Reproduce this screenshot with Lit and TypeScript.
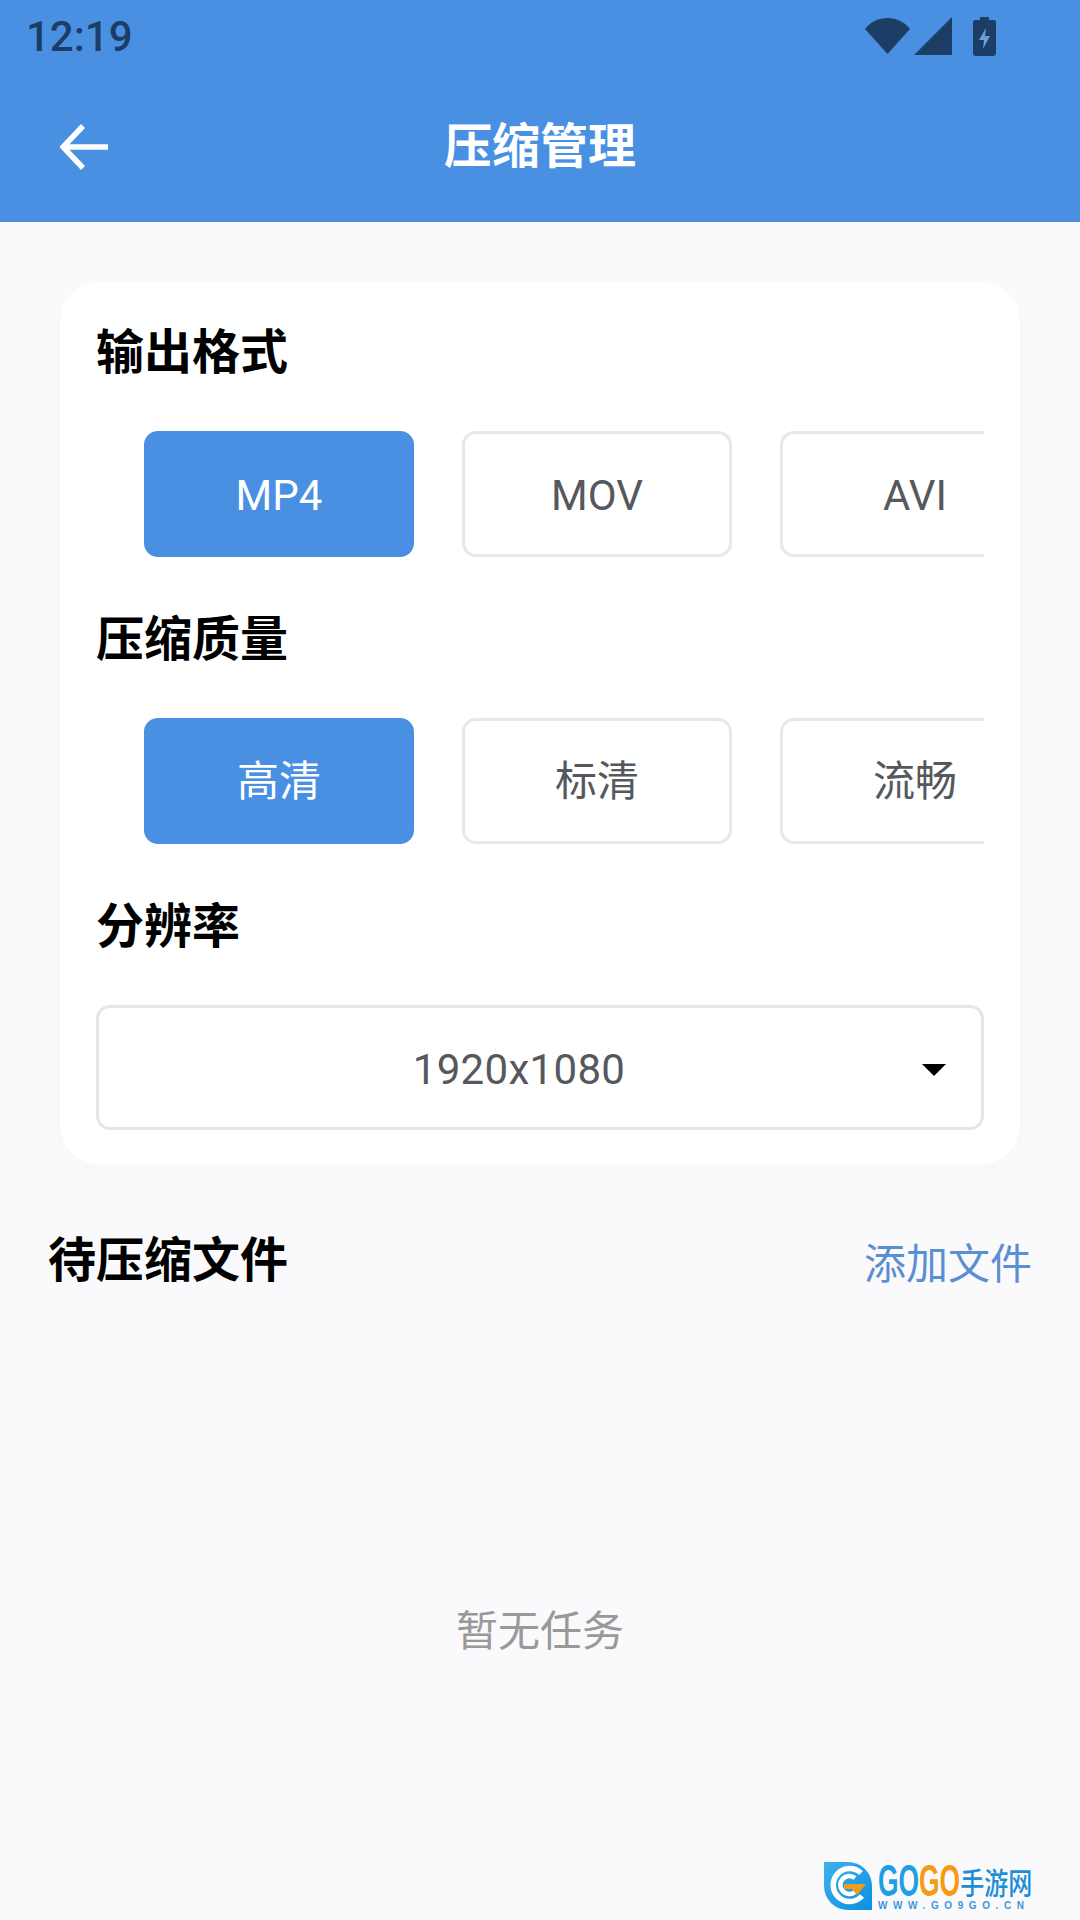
import { LitElement, html, css, svg } from "lit";
import { customElement } from "lit/decorators.js";

const logo = svg`<svg class="logo" viewBox="0 0 48 48" width="48" height="48">
  <defs><linearGradient id="lg" x1="0" y1="0" x2="1" y2="1"><stop offset="0" stop-color="#3fb0ea"/><stop offset="1" stop-color="#0a90e2"/></linearGradient></defs>
  <path d="M0 0H24A24 24 0 0 1 48 24V48H24A24 24 0 0 1 0 24Z" fill="url(#lg)"/>
  <path d="M37 11A16.500 16.500 0 1 0 38 34" fill="none" stroke="#fff" stroke-width="5.500"/>
  <path d="M31 16A9 9 0 1 0 31 30" fill="none" stroke="#fff" stroke-width="4.500"/>
  <path d="M20 22H42L33 33L28 27H20Z" fill="#f39a1e"/>
</svg>`;

@customElement("app-root")
export class AppRoot extends LitElement {
  static styles = css`
    :host { display: block; font-family: Roboto, "Noto Sans CJK SC", sans-serif; }
    .page { position: relative; width: 1080px; height: 1920px; background: #fafafc; display: flex; flex-direction: column; overflow: hidden; }
    .header { background: #4a90e2; height: 222px; display: flex; flex-direction: column; flex: none; }
    .status { height: 74px; display: flex; align-items: center; justify-content: space-between; padding: 0 84px 0 26px; color: #1b3d66; }
    .time { font-size: 42px; line-height: 74px; font-weight: 500; }
    .status-icons { display: flex; align-items: center; margin-bottom: 2px; }
    .status-icons svg { display: block; }
    .toolbar { flex: 1; display: grid; grid-template-columns: 1fr auto 1fr; align-items: center; padding: 0 60px 2px; }
    .back { display: block; }
    .toolbar h1 { margin: 0; color: #fff; font-size: 48px; font-weight: 700; line-height: 70px; }
    .card { margin: 60px 60px 0; padding: 36px 36px 35px; background: #fff; border-radius: 40px; box-shadow: 0 4px 16px rgba(0,0,0,0.012); }
    .label { margin: 0 0 43px; font-size: 48px; line-height: 70px; font-weight: 700; color: #000; }
    .opts { display: flex; gap: 48px; padding-left: 48px; overflow: hidden; margin-bottom: 48px; }
    .opt { flex: none; box-sizing: border-box; width: 270px; height: 126px; display: flex; align-items: center; justify-content: center; border: 3px solid #e8e8ec; border-radius: 14px; background: #fff; color: #55585d; font-size: 42px; padding-top: 2px; }
    .opts.zh-opts .opt { font-family: "Noto Sans CJK SC", sans-serif; padding-top: 0; padding-bottom: 7px; }
    .opt.on { background: #4a90e2; border-color: #4a90e2; color: #fff; }
    .select { box-sizing: border-box; height: 125px; display: flex; align-items: center; position: relative; border: 3px solid #e6e6e8; border-radius: 14px; color: #55585d; font-size: 42px; justify-content: center; padding: 3px 42px 0 0; letter-spacing: 0.3px; }
    .caret { position: absolute; right: 35px; top: 56px; width: 0; height: 0; border-left: 12px solid transparent; border-right: 12px solid transparent; border-top: 12px solid #000; }
    .list-head { margin-top: 60px; padding: 0 48px; display: flex; align-items: center; justify-content: space-between; height: 70px; }
    .list-head h2 { margin: 2px 0 0; font-size: 48px; font-weight: 700; color: #000; line-height: 70px; }
    .add { color: #5a8fd2; font-size: 42px; }
    .empty { margin-top: 307px; text-align: center; color: #999; font-size: 42px; line-height: 60px; }
    .mark { position: absolute; left: 824px; top: 1862px; display: flex; gap: 6px; }
    .logo { display: block; flex: none; }
    .mark-text { display: flex; flex-direction: column; width: 152px; }
    .brand { display: flex; align-items: center; height: 38px; font-family: "Liberation Sans", "Noto Sans CJK SC", sans-serif; font-weight: 700; white-space: nowrap; transform-origin: left center; transform: scaleX(0.6); }
    .go { font-size: 44px; line-height: 38px; }
    .go.b { color: #1e9fe4; }
    .go.o { color: #f59a12; }
    .zh { font-size: 30px; color: #1b8ed8; line-height: 38px; font-family: "Noto Sans CJK SC", sans-serif; font-weight: 500; display: inline-block; transform-origin: left center; transform: scaleX(1.333); }
    .url { margin-top: 1px; font-family: "Liberation Sans", sans-serif; font-size: 10px; line-height: 10px; font-weight: 700; letter-spacing: 5.6px; color: #3c97d6; white-space: nowrap; }
  `;

  render() {
    return html`<div class="page">
      <header class="header">
        <div class="status">
          <span class="time">12:19</span>
          <div class="status-icons">
            <svg width="45" height="38" viewBox="0 0 45 38"><path d="M22.5 37L0 12C6 4.500 14 1 22.500 1C31 1 39 4.500 45 12Z" fill="#1b3d66"/></svg>
            <svg style="margin-left:4px" width="38" height="38" viewBox="0 0 38 38"><path d="M38 0V38H0Z" fill="#1b3d66"/></svg>
            <svg style="margin-left:21px" width="23" height="39" viewBox="0 0 23 39"><path d="M7 0H16V3H21C22 3 23 4 23 5V36C23 38 22 39 20 39H3C1 39 0 38 0 36V5C0 4 1 3 2 3H7Z" fill="#1b3d66"/><path d="M13 11L6 23H11L10 32L17 19H12Z" fill="#6a9fd8"/></svg>
          </div>
        </div>
        <div class="toolbar">
          <svg class="back" width="48" height="46" viewBox="0 0 48 46"><path d="M23 2L3 23L23 44M3 23H48" fill="none" stroke="#fff" stroke-width="5.500"/></svg>
          <h1>压缩管理</h1>
          <span></span>
        </div>
      </header>
      <section class="card">
        <h3 class="label">输出格式</h3>
        <div class="opts"><div class="opt on">MP4</div><div class="opt">MOV</div><div class="opt">AVI</div></div>
        <h3 class="label">压缩质量</h3>
        <div class="opts zh-opts"><div class="opt on">高清</div><div class="opt">标清</div><div class="opt">流畅</div></div>
        <h3 class="label">分辨率</h3>
        <div class="select">1920x1080<span class="caret"></span></div>
      </section>
      <div class="list-head"><h2>待压缩文件</h2><span class="add">添加文件</span></div>
      <div class="empty">暂无任务</div>
      <div class="mark">
        ${logo}
        <div class="mark-text">
          <div class="brand"><span class="go b">GO</span><span class="go o">GO</span><span class="zh">手游网</span></div>
          <div class="url">WWW.GO9GO.CN</div>
        </div>
      </div>
    </div>`;
  }
}
